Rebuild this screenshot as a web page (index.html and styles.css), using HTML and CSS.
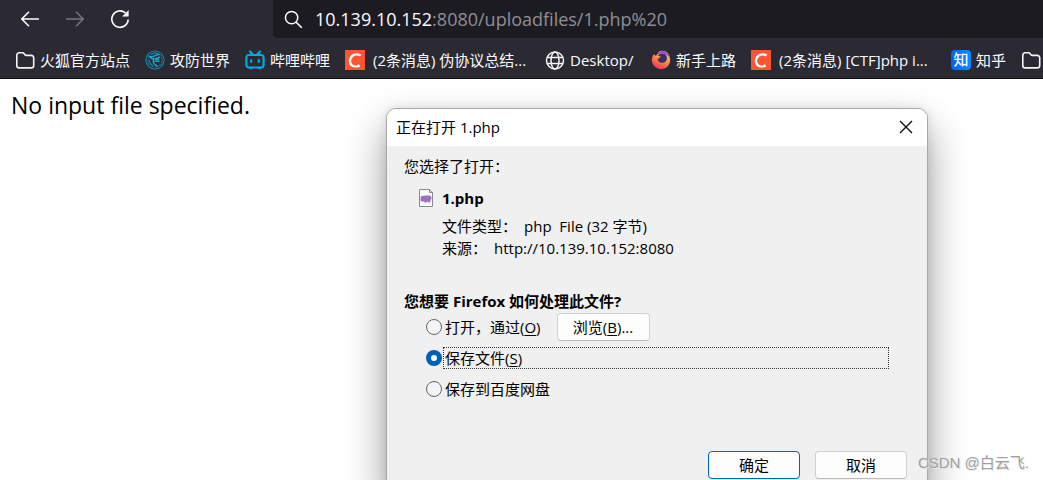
FILE: index.html
```html
<!DOCTYPE html>
<html lang="zh-CN">
<head>
<meta charset="utf-8">
<title>1.php</title>
<link rel="stylesheet" href="styles.css">
</head>
<body>
<svg class="defs" aria-hidden="true">
  <symbol id="folder" viewBox="0 0 20 20"><path d="M1.800 5.200a2.400 2.400 0 0 1 2.400-2.400h3.300c.8 0 1.200.3 1.700.9l.9 1.200c.3.4.6.500 1.100.500h5.100A2.400 2.400 0 0 1 18.700 7.800v7.700a2.400 2.400 0 0 1-2.400 2.400H4.200a2.400 2.400 0 0 1-2.400-2.400z" fill="none" stroke="#f4f4f6" stroke-width="1.600"/></symbol>
  <symbol id="csdn" viewBox="0 0 20 20"><path fill="#fc5531" d="M0 0h20v20H0z"/><path d="M15.600 5.600C13.400 4 9.600 3.900 7.200 6c-2.900 2.500-3 6.900-.5 9.100 2.100 1.800 5.700 1.600 7.900.3" fill="none" stroke="#fff" stroke-width="2.400"/></symbol>
</svg>
<header class="browser">
  <div class="toolbar">
    <button class="tool" aria-label="后退"><svg viewBox="0 0 20 20"><path d="M19 10H2M9 2.800 1.800 10 9 17.200" fill="none" stroke="#fbfbfe" stroke-width="1.600"/></svg></button>
    <button class="tool" aria-label="前进" disabled><svg viewBox="0 0 20 20"><path d="M1 10h17M11 2.800 18.200 10 11 17.200" fill="none" stroke="#77767c" stroke-width="1.500"/></svg></button>
    <button class="tool" aria-label="刷新"><svg viewBox="0 0 20 20"><path d="M15.500 4A8.200 8.200 0 1 0 18.200 10.500" fill="none" stroke="#fbfbfe" stroke-width="1.600"/><path d="M18.600 1v6.500h-6.500z" fill="#fbfbfe"/></svg></button>
    <div class="address">
      <svg class="search" viewBox="0 0 20 20"><circle cx="8" cy="8" r="6.500" fill="none" stroke="#fbfbfe" stroke-width="1.600"/><path d="m12.700 12.700 6 6" stroke="#fbfbfe" stroke-width="1.700"/></svg>
      <span class="url"><b>10.139.10.152</b>:8080/uploadfiles/1.php%20</span>
    </div>
  </div>
  <nav class="bookmarks">
    <a href="#"><svg><use href="#folder"/></svg><span>火狐官方站点</span></a>
    <a href="#"><svg viewBox="0 0 20 20" fill="none" stroke="#1684a8"><circle cx="10" cy="10" r="9" stroke-width="1.200"/><circle cx="10" cy="10" r="7" stroke-dasharray="3 1"/><path d="M14.500 4.500C11 4 8.500 8 4.500 6.500c1 2 3 2.500 5 2M15 7l-5 2 4 .5M8.500 9.500c-1 3 1 6 4.500 6.500M9.500 11l5 .5" stroke="#19a8d0" stroke-width="1.400"/><path d="M4.500 10c0 3 1.500 5 4 6M6 4.500l3-1.500 4 .5" stroke-width="1.200"/></svg><span>攻防世界</span></a>
    <a href="#"><svg viewBox="0 0 20 20" fill="none" stroke="#00a8e1" stroke-width="2.200" stroke-linecap="round"><rect x="1.400" y="5" width="17.200" height="12.500" rx="2.500"/><path d="m5 1.500 2.800 3M15 1.500l-2.800 3M6.200 10v2M13.800 10v2"/><path d="M5 18.300h1M14 18.300h1" stroke-width="1.800"/></svg><span>哔哩哔哩</span></a>
    <a href="#"><svg><use href="#csdn"/></svg><span class="long">(2条消息) 伪协议总结...</span></a>
    <a href="#"><svg viewBox="0 0 20 20" fill="none" stroke="#f4f4f6" stroke-width="1.500"><circle cx="10" cy="10.500" r="8.500"/><ellipse cx="10" cy="10.500" rx="4" ry="8.500"/><path d="M2.300 7.500h15.400M2.300 13.500h15.400"/></svg><span class="short">Desktop/</span></a>
    <a href="#"><svg viewBox="0 0 20 20"><defs><linearGradient id="fox" x1=".8" y1="0" x2=".3" y2="1"><stop offset="0" stop-color="#ffd84c"/><stop offset=".5" stop-color="#ff8a45"/><stop offset="1" stop-color="#f52e62"/></linearGradient></defs><path d="M2.800 4.300 5 6l3-4.500c5-2.500 10.800 1 11.200 8a9.200 9.200 0 0 1-18.400 1C.8 8.500 1.500 6 2.800 4.300z" fill="url(#fox)"/><path d="M7 2.500c5-4 11.800 0 12 6.500-1-2.500-2.500-4-4.500-4.700C12 3 9.500 3 7 4.500z" fill="#9a45dc"/><circle cx="11.200" cy="8.200" r="4.800" fill="#39306b"/><path d="M5 6c2-.5 3.500 0 5 1-2 .3-3 1.500-2.600 3z" fill="#ff9a3c"/></svg><span>新手上路</span></a>
    <a href="#"><svg><use href="#csdn"/></svg><span class="long">(2条消息) [CTF]php i...</span></a>
    <a href="#"><i class="zhihu">知</i><span>知乎</span></a>
    <a href="#" aria-label="文件夹"><svg><use href="#folder"/></svg></a>
  </nav>
</header>
<main class="page">No input file specified.</main>

<section class="dialog" role="dialog" aria-labelledby="dialog-title">
  <div class="titlebar">
    <span id="dialog-title">正在打开 1.php</span>
    <button class="close" aria-label="关闭"><svg viewBox="0 0 14 14"><path d="m1 1 12 12M13 1 1 13" stroke="#111" stroke-width="1.400"/></svg></button>
  </div>
  <div class="content">
    <p class="intro">您选择了打开：</p>
    <div class="file">
      <svg class="file-icon" viewBox="0 0 16 18"><path d="M1.500.5h10l3 3v14h-13z" fill="#fafafa" stroke="#8b8b8b"/><path d="M11.500.5v3h3" fill="none" stroke="#8b8b8b"/><path d="M2.500 8.500Q3 6.300 6 7l1-.5h4.500q2.500.5 2 3.500l-1 1-.5 2.500h-2l-.5-1.500-1 1.500h-2L6 12l-1.500 1-2-1.500z" fill="#9a73bd"/></svg>
      <div class="details">
        <strong>1.php</strong>
        <div class="pair"><span>文件类型：</span><span class="type">php&nbsp; File (32 字节)</span></div>
        <div class="pair"><span>来源：</span><span>http://10.139.10.152:8080</span></div>
      </div>
    </div>
    <fieldset class="choices">
      <legend>您想要 Firefox 如何处理此文件?</legend>
      <div class="choice"><input type="radio" name="action" id="open"><label for="open">打开，通过(<u>O</u>)</label><button class="button browse">浏览(<u>B</u>)...</button></div>
      <div class="choice"><input type="radio" name="action" id="save" checked><label class="focused" for="save">保存文件(<u>S</u>)</label></div>
      <div class="choice"><input type="radio" name="action" id="cloud"><label for="cloud">保存到百度网盘</label></div>
    </fieldset>
    <div class="actions"><button class="button primary">确定</button><button class="button">取消</button></div>
  </div>
</section>
<div class="watermark">CSDN @白云飞.</div>
</body>
</html>
```
FILE: styles.css
```css
* { box-sizing: border-box; }
body {
  margin: 0;
  min-height: 100vh;
  overflow: hidden;
  position: relative;
  background: #fff;
  color: #000;
  font: 15px/20px "Open Sans", "Noto Sans CJK SC", sans-serif;
}
button { font: inherit; color: inherit; padding: 0; border: 0; background: none; }
p { margin: 0; }
.defs { position: absolute; width: 0; height: 0; }

.browser { background: #2b2a33; border-bottom: 1px solid #0c0c0d; }
.toolbar { display: flex; height: 38px; padding-left: 20px; align-items: center; gap: 25px; }
.tool { width: 20px; height: 20px; }
.tool svg { display: block; width: 20px; height: 20px; }
.address {
  flex: 1;
  height: 38px;
  margin-left: 118px;
  padding-left: 11px;
  display: flex;
  align-items: center;
  gap: 12px;
  background: #1c1b22;
  border-bottom-left-radius: 5px;
}
.search { width: 19px; height: 19px; }
.url { font-size: 18px; line-height: 24px; color: #8f8f94; white-space: nowrap; }
.url b { font-weight: 400; color: #fbfbfe; }

.bookmarks { display: flex; height: 40px; padding: 3px 0 0 15px; align-items: center; gap: 15px; overflow: hidden; }
.bookmarks a { display: flex; flex: none; align-items: center; gap: 5px; color: #fbfbfe; text-decoration: none; white-space: nowrap; }
.bookmarks svg, .zhihu { width: 20px; height: 20px; }
.long { width: 160px; padding-left: 3px; }
.short { min-width: 66px; }
.zhihu { border-radius: 4px; background: linear-gradient(90deg, #0062f5, #0a8cff); font-style: normal; font-weight: 500; text-align: center; line-height: 19px; }

.page { padding: 10px 11px; font-size: 23px; line-height: 32px; }

.dialog {
  position: absolute;
  left: 386px;
  top: 108px;
  width: 542px;
  border: 1px solid #a9a9a9;
  border-radius: 10px;
  background: #f0f0f0;
  box-shadow: 0 20px 40px rgba(0, 0, 0, .4), 0 0 10px rgba(0, 0, 0, .1);
}
.titlebar { display: flex; height: 37px; padding: 0 14px 2px 9px; align-items: center; justify-content: space-between; background: #fff; border-radius: 9px 9px 0 0; }
.close { width: 14px; height: 14px; }
.close svg { display: block; width: 14px; height: 14px; }
.content { padding: 10px 20px 20px 17px; }
.file { display: flex; gap: 8px; margin-top: 11px; padding-left: 14px; }
.file-icon { width: 16px; height: 18px; margin-top: 2px; }
.details { line-height: 22px; }
.details strong { display: block; margin-bottom: 6px; }
.pair { display: flex; gap: 7px; }
.choices { margin: 32px 0 0; padding: 0 0 0 22px; border: 0; }
.choices legend { margin: 0 0 1px -22px; padding: 0; font-weight: 700; }
.choice { display: flex; height: 30px; align-items: center; }
.choice + .choice { height: 31px; }
.choice input { appearance: none; flex: none; width: 16px; height: 16px; margin: 0 1px 0 0; border: 1px solid #666; border-radius: 50%; background: #f5f5f5; }
.choice input:checked { border: 5px solid #005fb8; background: #fff; }
.choice label { padding: 0 1px; border: 1px dotted transparent; }
.choice .focused { flex: 1; height: 22px; margin-right: 18px; border-color: #333; }
.button { height: 28px; width: 92px; border: 1px solid #d0d0d0; border-bottom-color: #bbb; border-radius: 4px; background: #fdfdfd; }
.browse { width: 93px; margin-left: 14px; }
.primary { border-color: #0067c0; }
.actions { display: flex; justify-content: flex-end; gap: 15px; margin-top: 47px; }
u { text-underline-offset: 2px; }

.watermark { position: absolute; right: 14px; top: 452px; font: 15px/22px "Liberation Sans", "Noto Sans CJK SC", sans-serif; color: #a0a0a0; text-shadow: 1px 1px 0 #e8e8e8; }
```
